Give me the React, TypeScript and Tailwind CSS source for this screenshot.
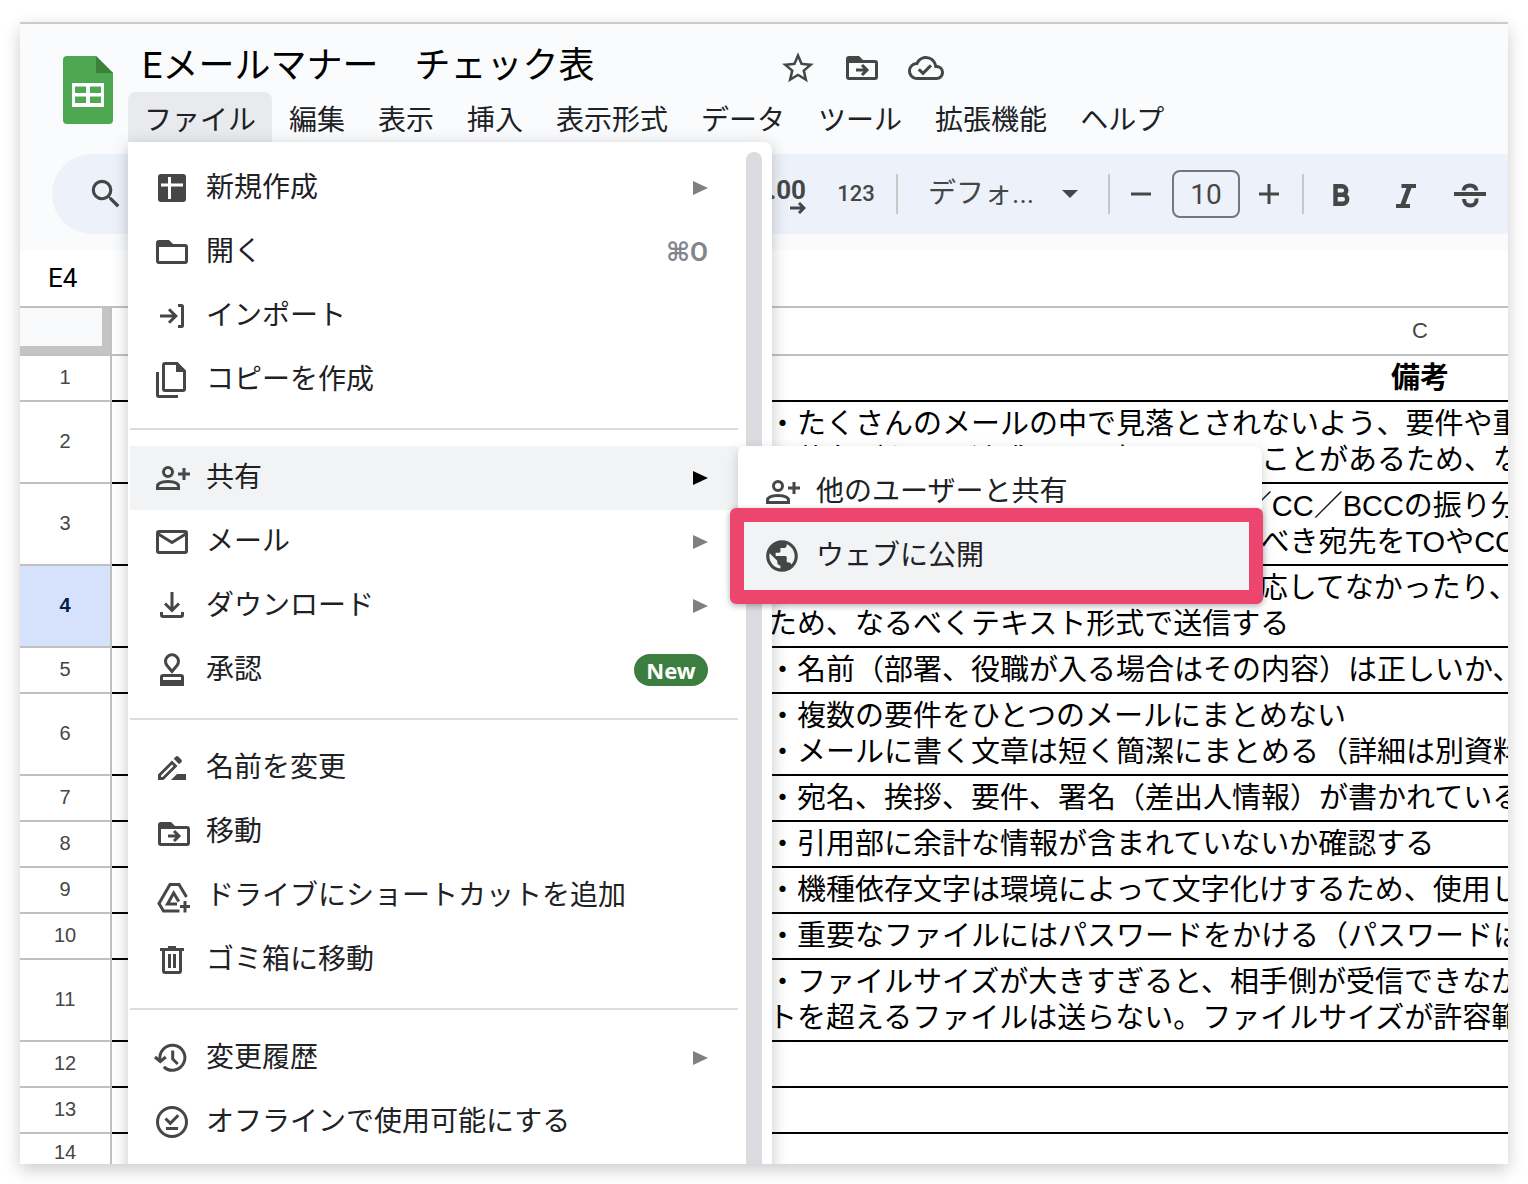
import { MdOutlineCloudDone, MdPublic, MdSearch, MdStarBorder } from "react-icons/md";

interface IconProps {
    children: React.ReactNode;
}

interface MenuEntry {
    label: string;
    icon: React.ReactElement;
    arrow?: boolean;
    shortcut?: string;
    badge?: string;
    submenu?: boolean;
}

interface SheetRow {
    no: number;
    lines: string[];
    height: string;
    heading?: boolean;
    selected?: boolean;
}

const Icon: React.FC<IconProps> = ({ children }) => (
    <svg
        className="size-10 shrink-0 text-[#444746]"
        viewBox="0 0 40 40"
        fill="none"
        stroke="currentColor"
        strokeWidth="3"
        aria-hidden="true"
    >
        {children}
    </svg>
);

const FolderShape = () => (
    <path
        d="M7 8h10l4 4h12a3 3 0 0 1 3 3v14a3 3 0 0 1-3 3H7a3 3 0 0 1-3-3V11a3 3 0 0 1 3-3zM7 15v14h26V15z"
        fill="currentColor"
        fillRule="evenodd"
        stroke="none"
    />
);

const NewIcon = () => (
    <Icon>
        <rect x="6" y="6" width="28" height="28" rx="3" fill="currentColor" stroke="none" />
        <path d="M9 17h22M17.5 9v22" stroke="#fff" />
    </Icon>
);

const OpenIcon = () => (
    <Icon>
        <FolderShape />
    </Icon>
);

const ImportIcon = () => (
    <Icon>
        <path d="M8 20h15.500M17 13.200l6.800 6.800-6.800 6.800M26 9.500h3.500a1 1 0 0 1 1 1v19a1 1 0 0 1-1 1H26" />
    </Icon>
);

const CopyIcon = () => (
    <Icon>
        <path d="M13 3.500h12l7.500 7.500v18a1.500 1.500 0 0 1-1.500 1.500H13a1.500 1.500 0 0 1-1.500-1.500V5a1.500 1.500 0 0 1 1.500-1.500z" />
        <path d="M24 3v9h9z" fill="currentColor" stroke="none" />
        <path d="M5.500 12v23a1.500 1.500 0 0 0 1.500 1.500h19" />
    </Icon>
);

const ShareIcon = () => (
    <Icon>
        <circle cx="16" cy="14" r="4.500" />
        <path d="M5.500 30.500v-2c0-3.400 5-5 10.500-5s10.500 1.600 10.500 5v2zM26 16h12M32 10v12" />
    </Icon>
);

const MailIcon = () => (
    <Icon>
        <rect x="5.500" y="9.500" width="29" height="21" rx="1.500" />
        <path d="M5.500 11.500L20 20.500l14.500-9" />
    </Icon>
);

const DownloadIcon = () => (
    <Icon>
        <path d="M20 6v18M13 17.500l7 7 7-7M9.500 26v3a1.500 1.500 0 0 0 1.500 1.500h18a1.500 1.500 0 0 0 1.500-1.500v-3" />
    </Icon>
);

const ApproveIcon = () => (
    <Icon>
        <path d="M20 21.500l-5-6a6.500 6.500 0 1 1 10 0z" />
        <path
            d="M11 24h18a3 3 0 0 1 3 3v9H8v-9a3 3 0 0 1 3-3zM11 27v3h18v-3z"
            fill="currentColor"
            fillRule="evenodd"
            stroke="none"
        />
    </Icon>
);

const RenameIcon = () => (
    <Icon>
        <g fill="currentColor" stroke="none">
            <path d="M6 32v-5.500L20 12.500l5.500 5.500-14 14zM9 29h1.500l11-11-1.500-1.500-11 11z" fillRule="evenodd" />
            <path d="M21.700 10.800l2-2a2 2 0 0 1 2.800 0l2.700 2.700a2 2 0 0 1 0 2.800l-2 2z" />
            <path d="M19 32l6-6h9v6z" />
        </g>
    </Icon>
);

const MoveArrow = () => <path d="M14 22h10M20 17l5 5-5 5" />;

const MoveIcon = () => (
    <Icon>
        <g transform="translate(2 2)">
            <FolderShape />
            <MoveArrow />
        </g>
    </Icon>
);

const DriveIcon = () => (
    <Icon>
        <path d="M34.500 21L27 8.500h-9L7 27.500l4.500 7.500H27.500" />
        <path d="M26.800 25.500L21.700 17 15.500 28H25" />
        <path d="M28 30.500h10M33 25v11.500" />
    </Icon>
);

const TrashIcon = () => (
    <Icon>
        <path d="M8 9.500h24M11.500 10v21a1.500 1.500 0 0 0 1.500 1.500h14a1.500 1.500 0 0 0 1.500-1.500V10M17.500 14v14M22.500 14v14" />
        <path d="M16 7.500h8" />
    </Icon>
);

const HistoryIcon = () => (
    <Icon>
        <path d="M8.200 22.500A12.500 12.500 0 1 1 11.800 28.800" />
        <path d="M3 19l5.300 4.500 5.500-4.500M20.700 12.500v8.500l5 5" />
    </Icon>
);

const OfflineIcon = () => (
    <Icon>
        <circle cx="20" cy="20" r="14.500" />
        <path d="M13.500 16.500l4.800 4.800 8-8M14 26.500h12" />
    </Icon>
);

const SheetsLogo = () => (
    <svg className="h-[68px] w-[50px]" viewBox="0 0 50 68" aria-hidden="true">
        <path d="M4 0h29l17 17v47a4 4 0 0 1-4 4H4a4 4 0 0 1-4-4V4a4 4 0 0 1 4-4z" fill="#4ea852" />
        <path d="M33 0l17 17H33z" fill="#3b8139" />
        <path
            d="M9 27h32v24H9zM12 30.500v6.500h11v-6.500zM27 30.500v6.500h11v-6.500zM12 40.500V47h11v-6.500zM27 40.500V47h11v-6.500z"
            fill="#fff"
            fillRule="evenodd"
        />
    </svg>
);

const menuBar = ["編集", "表示", "挿入", "表示形式", "データ", "ツール", "拡張機能", "ヘルプ"];

const menuGroups: MenuEntry[][] = [
    [
        { label: "新規作成", icon: <NewIcon />, arrow: true },
        { label: "開く", icon: <OpenIcon />, shortcut: "⌘O" },
        { label: "インポート", icon: <ImportIcon /> },
        { label: "コピーを作成", icon: <CopyIcon /> },
    ],
    [
        { label: "共有", icon: <ShareIcon />, arrow: true, submenu: true },
        { label: "メール", icon: <MailIcon />, arrow: true },
        { label: "ダウンロード", icon: <DownloadIcon />, arrow: true },
        { label: "承認", icon: <ApproveIcon />, badge: "New" },
    ],
    [
        { label: "名前を変更", icon: <RenameIcon /> },
        { label: "移動", icon: <MoveIcon /> },
        { label: "ドライブにショートカットを追加", icon: <DriveIcon /> },
        { label: "ゴミ箱に移動", icon: <TrashIcon /> },
    ],
    [
        { label: "変更履歴", icon: <HistoryIcon />, arrow: true },
        { label: "オフラインで使用可能にする", icon: <OfflineIcon /> },
    ],
];

const rows: SheetRow[] = [
    { no: 1, height: "h-[46px]", heading: true, lines: ["備考"] },
    {
        no: 2,
        height: "h-[82px]",
        lines: [
            "・たくさんのメールの中で見落とされないよう、要件や重要度を書く",
            "・件名がないと迷惑メール扱いされることがあるため、なるべく書く",
        ],
    },
    {
        no: 3,
        height: "h-[82px]",
        lines: [
            "・宛先は正しいかを必ず確認し、TO／CC／BCCの振り分",
            "分けができているか、また本来入れるべき宛先をTOやCCに入れる",
        ],
    },
    {
        no: 4,
        height: "h-[82px]",
        selected: true,
        lines: [
            "・装飾メールは相手の環境によって対応してなかったり、崩れる",
            "ため、なるべくテキスト形式で送信する",
        ],
    },
    { no: 5, height: "h-[46px]", lines: ["・名前（部署、役職が入る場合はその内容）は正しいか、確認する"] },
    {
        no: 6,
        height: "h-[82px]",
        lines: [
            "・複数の要件をひとつのメールにまとめない",
            "・メールに書く文章は短く簡潔にまとめる（詳細は別資料にする）",
        ],
    },
    { no: 7, height: "h-[46px]", lines: ["・宛名、挨拶、要件、署名（差出人情報）が書かれているか確認する"] },
    { no: 8, height: "h-[46px]", lines: ["・引用部に余計な情報が含まれていないか確認する"] },
    { no: 9, height: "h-[46px]", lines: ["・機種依存文字は環境によって文字化けするため、使用しない"] },
    { no: 10, height: "h-[46px]", lines: ["・重要なファイルにはパスワードをかける（パスワードは別送）"] },
    {
        no: 11,
        height: "h-[82px]",
        lines: [
            "・ファイルサイズが大きすぎると、相手側が受信できなかったり、リミッ",
            "トを超えるファイルは送らない。ファイルサイズが許容範囲か確認する",
        ],
    },
    { no: 12, height: "h-[46px]", lines: [] },
    { no: 13, height: "h-[46px]", lines: [] },
    { no: 14, height: "h-10", lines: [] },
];

const ShareSubmenu = () => (
    <div className="absolute top-0 left-full z-10 w-[524px] rounded-lg bg-white pt-[14px] shadow-[0_4px_12px_rgba(60,64,67,0.25)]">
        <ul>
            <li>
                <button className="flex h-16 w-full items-center gap-[14px] px-6 text-left">
                    <ShareIcon />
                    他のユーザーと共有
                </button>
            </li>
            <li className="-mt-[2px]">
                <button className="flex h-[68px] w-full items-center gap-[14px] bg-[#f1f3f4] px-6 text-left">
                    <span className="flex size-10 shrink-0 items-center justify-center text-[#444746]">
                        <MdPublic size={38} />
                    </span>
                    ウェブに公開
                </button>
            </li>
        </ul>
        <div className="pointer-events-none absolute top-[62px] -left-2 h-24 w-[533px] rounded-md border-14 border-[#ec466e] shadow-[0_2px_6px_rgba(0,0,0,0.3)]" />
    </div>
);

const MenuItem: React.FC<{ entry: MenuEntry }> = ({ entry }) => (
    <li className="relative">
        <button
            className={`flex h-16 w-full items-center gap-[14px] pr-[30px] pl-[22px] text-left ${entry.submenu ? "bg-[#f1f3f4]" : ""}`}
        >
            {entry.icon}
            <span className="flex-1">{entry.label}</span>
            {entry.shortcut && (
                <span className="font-[Roboto,'DejaVu_Sans',sans-serif] text-[26px] font-semibold text-[#80868b]">
                    {entry.shortcut}
                </span>
            )}
            {entry.badge && (
                <span className="flex h-8 w-[74px] items-center justify-center rounded-full bg-[#3c7d40] font-['Noto_Sans',sans-serif] text-[22px] font-bold text-white">
                    {entry.badge}
                </span>
            )}
            {entry.arrow && (
                <svg
                    className={`h-[14px] w-[15px] ${entry.submenu ? "text-black" : "text-[#808080]"}`}
                    viewBox="0 0 15 14"
                    fill="currentColor"
                    aria-hidden="true"
                >
                    <path d="M0 0l15 7-15 7z" />
                </svg>
            )}
        </button>
        {entry.submenu && <ShareSubmenu />}
    </li>
);

const FileMenu = () => (
    <div className="absolute top-full left-0 z-20 flex w-[644px] rounded-tr-lg bg-white p-[2px] shadow-[0_4px_16px_rgba(60,64,67,0.3)]">
        <div className="w-[608px] pt-3 pb-8">
            {menuGroups.map((group, i) => (
                <ul key={i} className={i > 0 ? "mt-4 border-t-2 border-[#dadce0] pt-4" : ""}>
                    {group.map((entry) => (
                        <MenuItem key={entry.label} entry={entry} />
                    ))}
                </ul>
            ))}
        </div>
        <div className="mt-2 ml-2 w-4 rounded-t-full bg-[#dadce0]" />
    </div>
);

const Divider = () => <div className="h-10 w-[2px] shrink-0 bg-[#c7c7c7]" />;

const Toolbar = () => (
    <div className="mt-3 ml-8 flex h-20 items-center rounded-l-full bg-[#edf2fa] pl-[34px] text-[#444746]">
        <button className="flex size-10 shrink-0 items-center justify-center" aria-label="検索">
            <MdSearch size={38} />
        </button>
        <div className="w-[638px] shrink-0" />
        <button className="flex w-14 shrink-0 flex-col items-end pt-1 pr-[14px] text-[26px] leading-6 font-bold" aria-label="小数点以下の桁数を増やす">
            .00
            <svg className="h-3 w-4" viewBox="0 0 16 12" fill="none" stroke="currentColor" strokeWidth="3" aria-hidden="true">
                <path d="M0 6h14M9 1l5 5-5 5" />
            </svg>
        </button>
        <button className="w-[76px] shrink-0 pr-1 text-[22px] font-medium">123</button>
        <Divider />
        <button className="flex w-[210px] shrink-0 items-center justify-between px-[30px] text-[28px]">
            デフォ...
            <svg className="h-2 w-4" viewBox="0 0 16 8" fill="currentColor" aria-hidden="true">
                <path d="M0 0h16L8 8z" />
            </svg>
        </button>
        <Divider />
        <button className="flex w-[62px] shrink-0 justify-center" aria-label="小さく">
            <svg className="size-5" viewBox="0 0 20 20" stroke="currentColor" strokeWidth="3" aria-hidden="true">
                <path d="M0 10h20" />
            </svg>
        </button>
        <input
            className="h-12 w-[68px] shrink-0 rounded-lg border-2 border-[#747775] text-center text-[28px]"
            aria-label="フォントサイズ"
            defaultValue="10"
        />
        <button className="flex w-[62px] shrink-0 justify-center pr-1" aria-label="大きく">
            <svg className="size-5" viewBox="0 0 20 20" stroke="currentColor" strokeWidth="3" aria-hidden="true">
                <path d="M0 10h20M10 0v20" />
            </svg>
        </button>
        <Divider />
        <div className="flex shrink-0 gap-6 pl-[18px]">
            <button className="size-10" aria-label="太字">
                <svg className="size-10" viewBox="0 0 40 40" fill="none" stroke="currentColor" strokeWidth="4.400" aria-hidden="true">
                    <path d="M13.500 12.200h6.500a4.200 4.200 0 0 1 0 8.600h-6.500zM13.500 20.800h7.200a4.500 4.500 0 0 1 0 9h-7.200z" />
                </svg>
            </button>
            <button className="size-10" aria-label="斜体">
                <svg className="size-10" viewBox="0 0 40 40" fill="currentColor" aria-hidden="true">
                    <path d="M15.500 10H30v4h-4.500l-6 16H24v4H10v-4h4.500l6-16h-5z" />
                </svg>
            </button>
            <button className="size-10" aria-label="取り消し線">
                <svg className="size-10" viewBox="0 0 40 40" fill="none" stroke="currentColor" strokeWidth="4" aria-hidden="true">
                    <path d="M4 20h32" />
                    <path d="M13.500 16.500c.5-3.200 3-5 6.500-5s6 1.800 6.500 5M14 25c0 4 2.500 6.500 6.500 6.500s6.500-3 6-7" />
                </svg>
            </button>
        </div>
    </div>
);

const Header = () => (
    <header className="border-t-2 border-[#c9cccb] bg-[#f9fbfd] pb-4">
        <div className="flex">
            <div className="w-[108px] shrink-0 pt-8 pl-[43px]">
                <SheetsLogo />
            </div>
            <div>
                <div className="flex h-[68px] items-center pt-5">
                    <input
                        className="h-12 w-[650px] bg-transparent pb-3 pl-[14px] text-4xl text-black"
                        aria-label="名前を変更"
                        defaultValue="Eメールマナー　チェック表"
                    />
                    <div className="flex gap-6 text-[#444746]">
                        <button className="flex size-10 items-center justify-center" aria-label="スターを付ける">
                            <MdStarBorder size={38} />
                        </button>
                        <button className="size-10" aria-label="移動">
                            <Icon>
                                <FolderShape />
                                <MoveArrow />
                            </Icon>
                        </button>
                        <button className="flex size-10 items-center justify-center" aria-label="ドキュメントのステータス">
                            <MdOutlineCloudDone size={36} />
                        </button>
                    </div>
                </div>
                <nav className="flex h-[50px] gap-px">
                    <div className="relative">
                        <button className="h-full rounded-t-lg bg-[#e8eaed] px-4 pt-2 whitespace-nowrap">ファイル</button>
                        <FileMenu />
                    </div>
                    {menuBar.map((label) => (
                        <button key={label} className="px-4 pt-2 whitespace-nowrap">
                            {label}
                        </button>
                    ))}
                </nav>
            </div>
        </div>
        <Toolbar />
    </header>
);

const Sheet = () => (
    <div className="min-h-0 flex-1 overflow-hidden">
        <table className="w-[2052px] table-fixed border-separate border-spacing-0 font-['Liberation_Sans','Noto_Sans_CJK_JP',sans-serif]">
            <colgroup>
                <col className="w-[92px]" />
                <col className="w-[656px]" />
                <col className="w-[1304px]" />
            </colgroup>
            <thead>
                <tr className="h-12 text-xl text-[#444746]">
                    <td className="border-r-2 border-b-2 border-[#c0c0c0] p-0">
                        <div className="h-[46px] border-r-8 border-b-8 border-[#c4c4c4] bg-[#f8f9fb]" />
                    </td>
                    <th className="border-b-2 border-[#c0c0c0] p-0 font-normal">B</th>
                    <th className="border-b-2 border-[#c0c0c0] p-0 text-[22px] font-normal">C</th>
                </tr>
            </thead>
            <tbody>
                {rows.map((row) => (
                    <tr key={row.no} className={row.height}>
                        <th
                            className={`border-r-2 border-b-2 border-[#c0c0c0] px-0 pt-0 pb-[2px] text-xl ${
                                row.selected ? "bg-[#d6e2fb] font-bold text-[#041e49]" : "font-normal text-[#444746]"
                            }`}
                        >
                            {row.no}
                        </th>
                        <td className="border-b-2 border-black p-0" />
                        <td
                            className={`border-b-2 border-black p-0 text-[29px] leading-9 whitespace-nowrap text-black ${
                                row.heading ? "text-center font-bold" : ""
                            }`}
                        >
                            {row.lines.map((line) => (
                                <p key={line}>{line}</p>
                            ))}
                        </td>
                    </tr>
                ))}
            </tbody>
        </table>
    </div>
);

export default function App() {
    return (
        <div className="h-screen bg-white px-5 pt-[22px] pb-5 font-[Roboto,'Noto_Sans_CJK_JP',sans-serif] text-[28px] leading-9 text-[#202124]">
            <div className="h-full shadow-[0_6px_16px_rgba(0,0,0,0.2)]">
                <main className="flex h-full flex-col overflow-hidden bg-white">
                    <Header />
                    <div className="flex h-[58px] shrink-0 items-center border-b-2 border-[#c0c0c0] pl-7">
                        <input className="w-20 text-[26px] text-black" aria-label="名前ボックス" defaultValue="E4" />
                    </div>
                    <Sheet />
                </main>
            </div>
        </div>
    );
}
